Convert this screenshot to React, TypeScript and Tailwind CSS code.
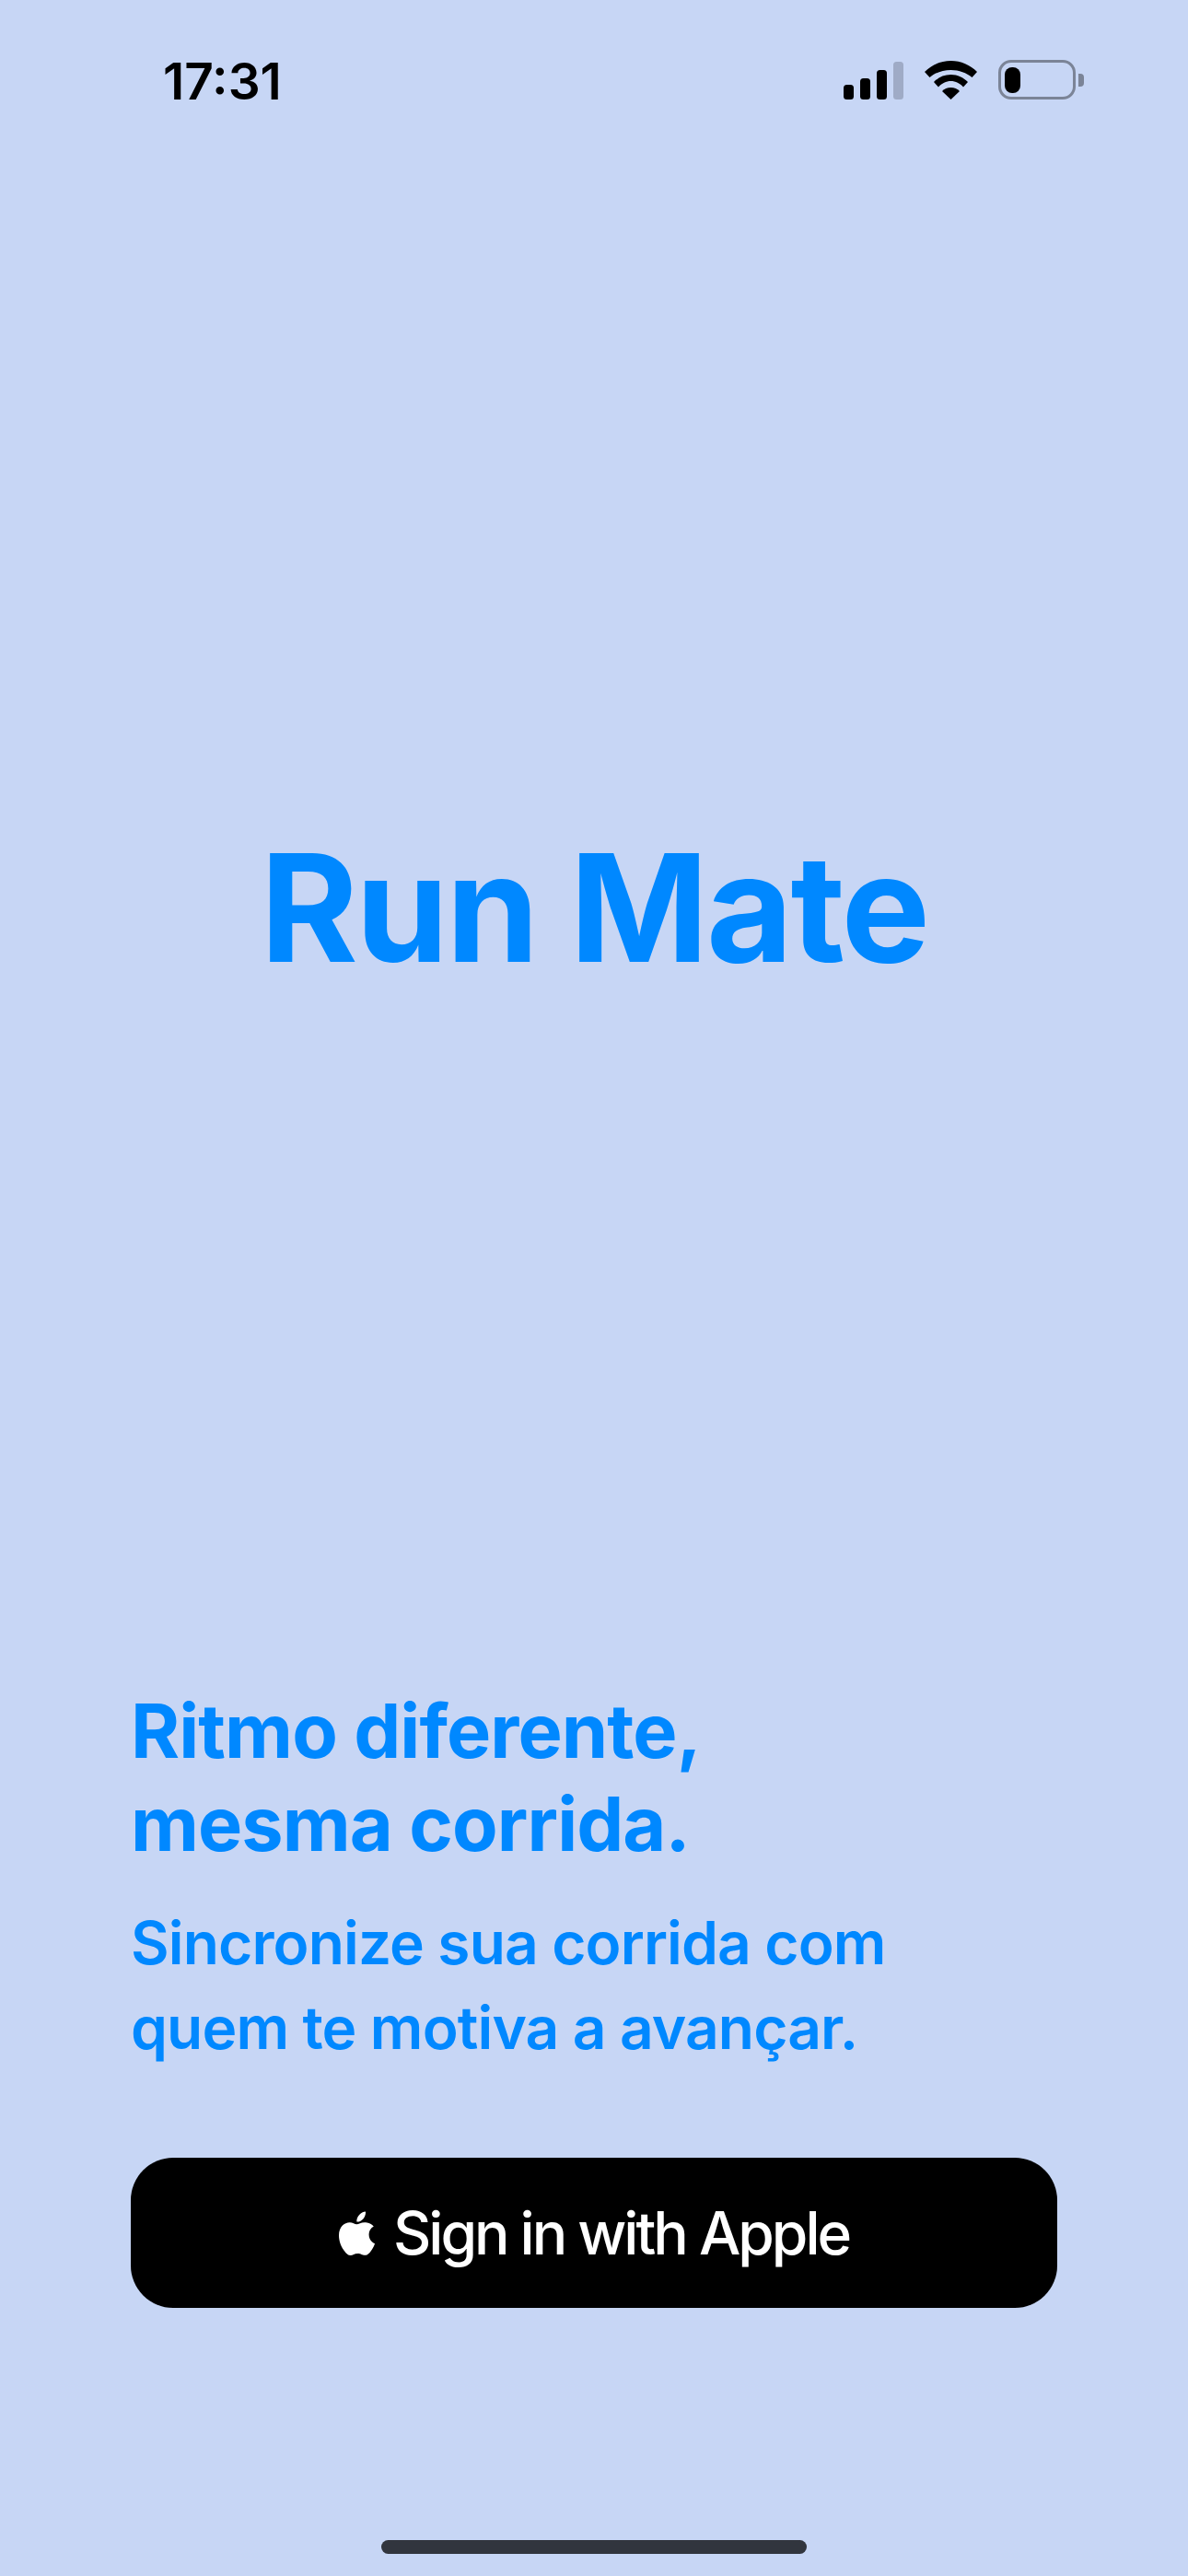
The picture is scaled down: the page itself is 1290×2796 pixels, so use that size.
function StatusIcons() {
  return (
    <div className="flex items-end">
      <svg width="65" height="41" viewBox="0 0 65 41" className="block">
        <rect x="0" y="25" width="11" height="16" rx="3.5" fill="#000" />
        <rect x="18" y="18" width="11" height="23" rx="3.5" fill="#000" />
        <rect x="36" y="9" width="11" height="32" rx="3.5" fill="#000" />
        <rect x="54" y="0" width="11" height="41" rx="3.5" fill="#9fabc6" />
      </svg>
      <svg width="57" height="42" viewBox="0 0 57 42" className="ml-[23px] block">
        <path d="M0 12C7.500 4.500 17.500 0 28.500 0S49.500 4.500 57 12l-5.500 6C45.500 13 37.500 10 28.500 10S11.500 13 5.500 18z" fill="#000" />
        <path d="M10 23c5-5 11-8 18.500-8S42 18 47 23l-5 5.500c-3.500-4-8.500-6.500-13.500-6.500S18.500 24.500 15 28.500z" fill="#000" />
        <path d="M19 33c2.500-2.700 5.700-4 9.500-4s7 1.300 9.500 4l-9.500 9z" fill="#000" />
      </svg>
      <div className="ml-[23px] flex items-center">
        <div className="flex h-[43px] w-[84px] items-center rounded-[14px] border-[3px] border-[#7b8497] pl-[4px]">
          <div className="h-[28px] w-[17px] rounded-[8px] bg-black" />
        </div>
        <div className="ml-[3px] h-[14px] w-[6px] rounded-r-[4px] bg-[#7b8497]" />
      </div>
    </div>
  );
}

function AppleLogo() {
  return (
    <svg width="39" height="48" viewBox="0 0 814 1000" className="block" fill="#fff">
      <path d="M788 341c-6 4-108 62-108 190 0 148 130 201 134 202-1 3-21 72-69 142-43 62-88 123-156 123s-86-39-164-39c-77 0-104 41-167 41s-106-58-156-128C45 789 0 664 0 546c0-190 123-290 245-290 65 0 118 42 159 42 39 0 100-45 174-45 28 0 129 3 210 88zM554 169c31-36 52-87 52-138 0-7-1-14-2-20-50 2-110 33-146 75-28 32-55 83-55 135 0 8 1 16 2 18 3 1 8 1 13 1 45 0 102-30 136-71z" />
    </svg>
  );
}

export default function App() {
  return (
    <div className="flex h-[2796px] w-[1290px] flex-col overflow-hidden bg-[#c7d6f5] font-['Inter',sans-serif]">
      <div className="flex h-[108px] items-end justify-between pl-[177px] pr-[113px]">
        <span className="text-[55px] leading-[39px] font-semibold text-black">17:31</span>
        <StatusIcons />
      </div>

      <div className="mt-[785px] text-center text-[162px] leading-[184px] font-bold tracking-[-2.6px] text-[#0088ff]">
        Run Mate
      </div>

      <div className="mt-[752px] px-[142px]">
        <h1 className="text-[81px] leading-[101px] font-bold tracking-[-0.9px] text-[#0088ff]">
          Ritmo diferente,
          <br />
          mesma corrida.
        </h1>
        <p className="mt-[32px] text-[64px] leading-[92px] font-semibold tracking-[-0.85px] text-[#0088ff]">
          Sincronize sua corrida com
          <br />
          quem te motiva a avançar.
        </p>
      </div>

      <button className="mx-[142px] mt-[95px] flex h-[163px] w-[1006px] items-center justify-center rounded-[46px] bg-black text-[64px] font-medium tracking-[-3px] text-white">
        <AppleLogo />
        <span className="ml-[20px]">Sign in with Apple</span>
      </button>

      <div className="mx-auto mt-auto mb-[24px] h-[15px] w-[462px] rounded-full bg-[#31353e]" />
    </div>
  );
}
